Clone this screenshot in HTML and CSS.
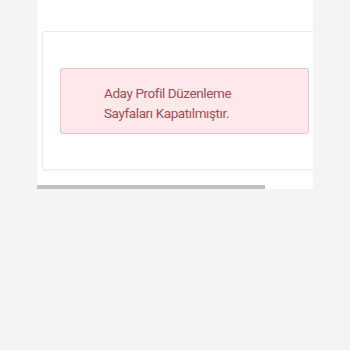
FILE: index.html
```html
<!DOCTYPE html>
<html>
<head>
  <meta charset="utf-8" />
  <meta name="viewport" content="width=device-width, initial-scale=1.0">
  <title>Aday Profil</title>
  <link rel="stylesheet" href="styles.css">
</head>
<body>
  <div class="page">
    <div class="page-inner">
      <div class="card">
        <div class="alert">
          <span class="alert-text">Aday Profil Düzenleme Sayfaları Kapatılmıştır.</span>
        </div>
      </div>
    </div>
    <div class="scrollbar">
      <div class="scrollbar-thumb"></div>
    </div>
  </div>
</body>
</html>
```

FILE: styles.css
```css
:root {
  --background: #f4f4f4;
  --card-border: #ebebeb;
  --alert-bg: #fde9e9;
  --alert-border: #efc3c5;
  --alert-text: #a34d55;
}

* {
  margin: 0;
  padding: 0;
  box-sizing: border-box;
  font-family: Roboto, "Noto Sans", sans-serif;
}

body {
  background: var(--background);
  min-height: 100vh;
}

.page {
  width: 276px;
  margin-left: 37px;
  background: white;
  overflow: hidden;
}

.page-inner {
  width: 334px;
  padding: 31px 0 15px 5px;
}

.card {
  background: white;
  border: 1px solid var(--card-border);
  border-radius: 2px;
  box-shadow: 0 1px 2px rgba(0,0,0,0.05);
  padding: 36px 0 35px 17px;
}

.alert {
  width: 249px;
  background: var(--alert-bg);
  border: 1px solid var(--alert-border);
  border-radius: 3px;
  padding: 14px 0 10px 43px;
}

.alert-text {
  display: block;
  max-width: 140px;
  color: var(--alert-text);
  font-size: 13.5px;
  line-height: 20px;
  letter-spacing: -0.4px;
}

.scrollbar {
  height: 4px;
  background: white;
}

.scrollbar-thumb {
  width: 228px;
  height: 100%;
  background: #c1c1c1;
}
```
